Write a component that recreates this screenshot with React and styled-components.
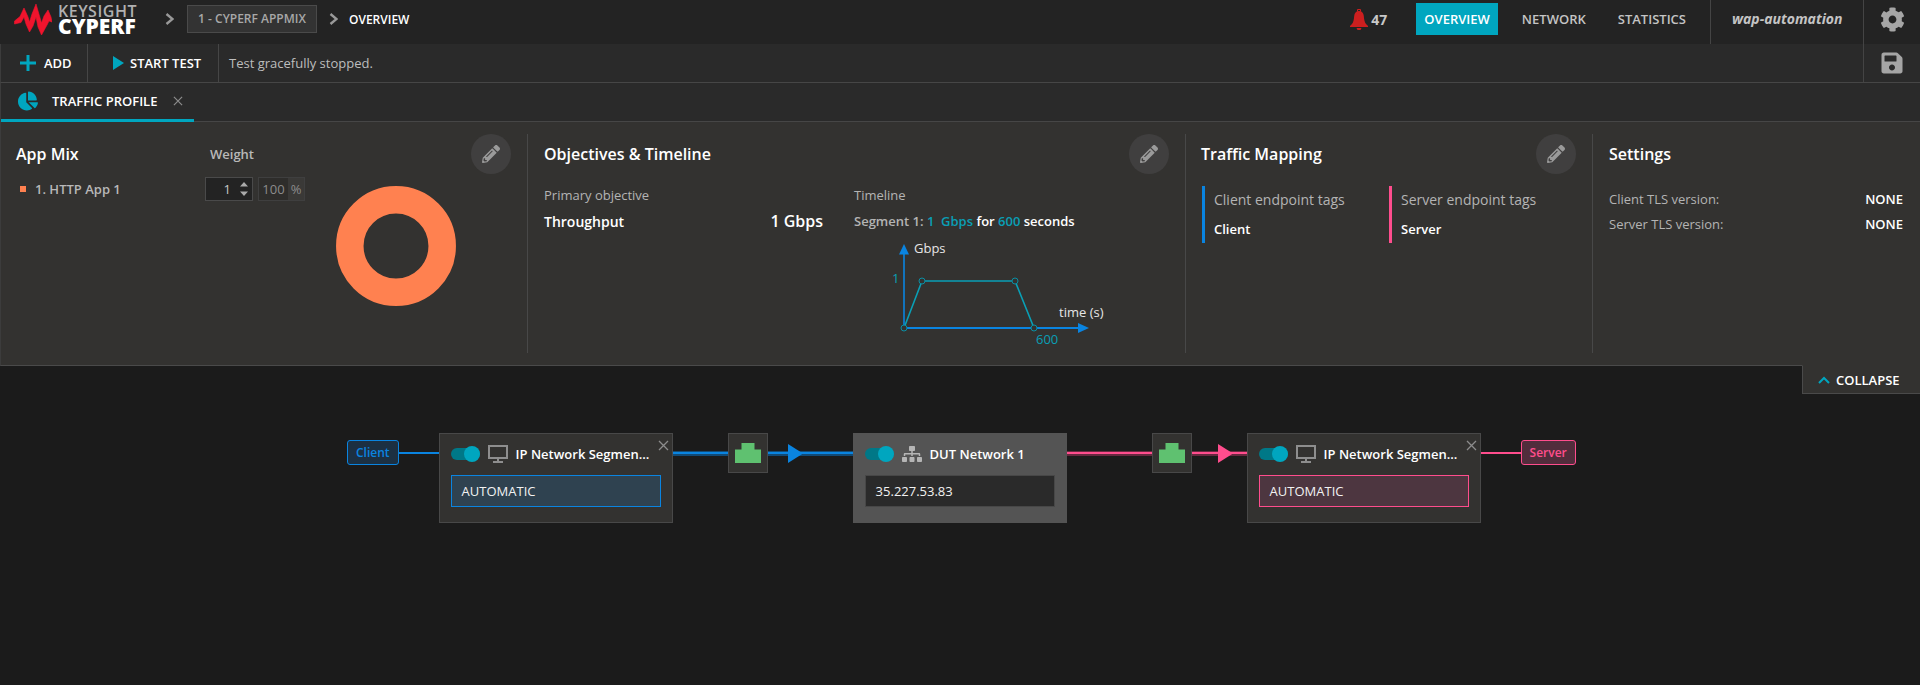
import React from 'react'
import styled, { createGlobalStyle } from 'styled-components'
import { FaCog, FaSave, FaChartPie, FaPencilAlt, FaSitemap } from 'react-icons/fa'

const TEAL = '#00a6bf'
const BLUE = '#0a84e0'
const PINK = '#ff4d8d'

const GlobalStyle = createGlobalStyle`
  html, body { margin: 0; padding: 0; height: 100%; background: #1b1b1b; }
  body { font-family: "Open Sans", "Noto Sans", sans-serif; color: #bbb; overflow: hidden; }
  * { box-sizing: border-box; }
`

function Chevron() {
  return (
    <svg width="9" height="12" viewBox="0 0 9 12" fill="none">
      <path d="M1.5 1l6 5-6 5" stroke="#999" strokeWidth="2.4" />
    </svg>
  )
}

function Logo() {
  return (
    <LogoWrap>
      <svg width="38" height="32" viewBox="0 0 38 32">
        <path
          d="M0.500 18L6 13.500L10 5L14 14L15.500 19L18 11L22 1L25.500 13L27.500 20L30 13L34 7L37 14L38 19L35 18L33 22L27.500 32L24 24L22 14L19 23L15.500 29L12 21L10 14L7 19.500L0.500 21z"
          fill="#f0142d"
          stroke="#f0142d"
          strokeWidth="0.600"
          strokeLinejoin="round"
        />
      </svg>
      <LogoText>
        <span>KEYSIGHT</span>
        <strong>CYPERF</strong>
      </LogoText>
    </LogoWrap>
  )
}

function Bell() {
  return (
    <svg width="18" height="21" viewBox="0 0 18 21" fill="#cc1f1f">
      <path d="M7 2.500V1a1 1 0 0 1 1-1h2a1 1 0 0 1 1 1v1.500h-1V1H8v1.500z" />
      <path d="M9 2c3 0 4.500 2 4.800 5 .3 3.500.7 6 2.200 8 .6.800 1.500 1.300 2 2v1H0v-1c.5-.7 1.400-1.200 2-2 1.500-2 1.900-4.500 2.200-8C4.500 4 6 2 9 2z" />
      <path d="M6.500 19h5l-1 2h-3z" />
    </svg>
  )
}

function Monitor() {
  return (
    <svg width="20" height="18" viewBox="0 0 20 18" fill="none" stroke="#8e8e8e" strokeWidth="2">
      <rect x="1" y="1" width="18" height="12" />
      <path d="M10 13v4M5 17h10" />
    </svg>
  )
}

function PortIcon() {
  return (
    <svg width="26" height="20" viewBox="0 0 26 20" fill="#5fc170">
      <path d="M6.500 0h13v6.500H26V20H0V6.500h6.500z" />
    </svg>
  )
}

function Cross({ size = 11 }) {
  return (
    <svg width={size} height={size} viewBox="0 0 11 11" fill="none" stroke="#8c8c8c" strokeWidth="1.300">
      <path d="M1 1l9 9M10 1l-9 9" />
    </svg>
  )
}

function TimelineChart() {
  return (
    <ChartSvg width="225" height="112" viewBox="0 0 225 112">
      <path d="M19 92V15" stroke={BLUE} strokeWidth="1.600" />
      <path d="M14 18.500L19 8l5 10.500z" fill={BLUE} />
      <path d="M19 92h176" stroke={BLUE} strokeWidth="2" />
      <path d="M193 87l11 5-11 5z" fill={BLUE} />
      <path d="M19 92L37 45H130L149 92" stroke="#0a9fb5" strokeWidth="1.600" fill="none" />
      {[[19, 92], [37, 45], [130, 45], [149, 92]].map(([cx, cy]) => (
        <circle key={cx} cx={cx} cy={cy} r="3" fill="#333230" stroke="#0a8ea3" strokeWidth="1" />
      ))}
      <ChartText x="29" y="17" fill="#e6e6e6">Gbps</ChartText>
      <ChartText x="7" y="47" fill="#0a9fb5">1</ChartText>
      <ChartText x="174" y="81" fill="#e6e6e6">time (s)</ChartText>
      <ChartText x="151" y="108" fill="#0a9fb5">600</ChartText>
    </ChartSvg>
  )
}

function NodeCard({ title, value, icon, kind, closable, width }) {
  return (
    <Card $width={width} $kind={kind}>
      {closable && <CloseBtn><Cross /></CloseBtn>}
      <CardHead>
        <Toggle />
        {icon}
        <CardTitle>{title}</CardTitle>
      </CardHead>
      <CardInput $kind={kind}>{value}</CardInput>
    </Card>
  )
}

function Wire({ color, halo, lead, gap }) {
  return (
    <WireWrap $color={color} $halo={halo} $lead={lead} $gap={gap}>
      <PortBox><PortIcon /></PortBox>
      <svg width="15" height="19" viewBox="0 0 15 19"><path d="M0 0l15 9.500L0 19z" fill={color} /></svg>
    </WireWrap>
  )
}

export default function App() {
  return (
    <Page>
      <GlobalStyle />
      <TopBar>
        <Logo />
        <Crumbs>
          <Chevron />
          <CrumbBox>1 - CYPERF APPMIX</CrumbBox>
          <Chevron />
          <CrumbCurrent>OVERVIEW</CrumbCurrent>
        </Crumbs>
        <TopRight>
          <Bell />
          <Count>47</Count>
          <NavItem $active>OVERVIEW</NavItem>
          <NavItem>NETWORK</NavItem>
          <NavItem>STATISTICS</NavItem>
          <UserName>wap-automation</UserName>
          <IconCell $nudge={-6}><FaCog size={25} color="#a5a5a5" /></IconCell>
        </TopRight>
      </TopBar>

      <ToolBar>
        <ToolBtn $width={87}>
          <svg width="16" height="16" viewBox="0 0 16 16"><path d="M6.500 0h3v6.500H16v3H9.500V16h-3V9.500H0v-3h6.500z" fill={TEAL} /></svg>
          ADD
        </ToolBtn>
        <ToolBtn $width={131} $lead={25}>
          <svg width="11" height="14" viewBox="0 0 11 14"><path d="M0 0l11 7-11 7z" fill={TEAL} /></svg>
          START TEST
        </ToolBtn>
        <StatusText>Test gracefully stopped.</StatusText>
        <IconCell><FaSave size={24} color="#a5a5a5" /></IconCell>
      </ToolBar>

      <TabBar>
        <Tab>
          <FaChartPie size={20} color={TEAL} />
          <TabLabel>TRAFFIC PROFILE</TabLabel>
          <Cross size={10} />
        </Tab>
      </TabBar>

      <Summary>
        <Section $width={527} $pad={15}>
          <EditBtn><FaPencilAlt size={18} /></EditBtn>
          <TitleRow>
            <SectionTitle $width={194}>App Mix</SectionTitle>
            <WeightLabel>Weight</WeightLabel>
          </TitleRow>
          <AppBody>
            <AppRow>
              <Square />
              <AppName>1. HTTP App 1</AppName>
              <Spinner>
                1
                <svg width="8" height="14" viewBox="0 0 8 14" fill="#aaa"><path d="M4 0l4 4.500H0zM0 9.500h8L4 14z" /></svg>
              </Spinner>
              <Percent>
                <PercentValue>100</PercentValue>
                <PercentUnit>%</PercentUnit>
              </Percent>
            </AppRow>
            <Donut width="120" height="120" viewBox="0 0 120 120">
              <circle cx="60" cy="60" r="46.200" fill="none" stroke="#ff8150" strokeWidth="27.500" />
            </Donut>
          </AppBody>
        </Section>

        <Section $width={658}>
          <EditBtn><FaPencilAlt size={18} /></EditBtn>
          <TitleRow><SectionTitle>Objectives &amp; Timeline</SectionTitle></TitleRow>
          <ObjectiveBody>
            <ObjectiveCol>
              <FieldLabel>Primary objective</FieldLabel>
              <ValueRow>
                <strong>Throughput</strong>
                <BigValue>1 Gbps</BigValue>
              </ValueRow>
            </ObjectiveCol>
            <TimelineCol>
              <FieldLabel>Timeline</FieldLabel>
              <SegmentLine>
                Segment 1: <Hl>1&nbsp; Gbps</Hl> <b>for</b> <Hl>600</Hl> <b>seconds</b>
              </SegmentLine>
              <TimelineChart />
            </TimelineCol>
          </ObjectiveBody>
        </Section>

        <Section $width={407} $pad={15}>
          <EditBtn><FaPencilAlt size={18} /></EditBtn>
          <TitleRow><SectionTitle>Traffic Mapping</SectionTitle></TitleRow>
          <TagsBody>
            <TagCol $color={BLUE}>
              <TagLabel>Client endpoint tags</TagLabel>
              <TagValue>Client</TagValue>
            </TagCol>
            <TagCol $color={PINK}>
              <TagLabel>Server endpoint tags</TagLabel>
              <TagValue>Server</TagValue>
            </TagCol>
          </TagsBody>
        </Section>

        <Section $last>
          <TitleRow><SectionTitle>Settings</SectionTitle></TitleRow>
          <SettingsBody>
            <SettingRow><span>Client TLS version:</span><strong>NONE</strong></SettingRow>
            <SettingRow><span>Server TLS version:</span><strong>NONE</strong></SettingRow>
          </SettingsBody>
        </Section>
      </Summary>

      <Canvas>
        <CollapseBtn>
          <svg width="12" height="8" viewBox="0 0 12 8" fill="none"><path d="M1 7l5-5 5 5" stroke={TEAL} strokeWidth="2" /></svg>
          COLLAPSE
        </CollapseBtn>
        <Diagram>
          <EndTag $color={BLUE} $bg="#1c3042">Client</EndTag>
          <Link $color={BLUE} />
          <NodeCard title="IP Network Segmen..." value="AUTOMATIC" icon={<Monitor />} kind="client" closable width={234} />
          <Wire color={BLUE} halo="#124a75" lead={55} gap={20} />
          <NodeCard title="DUT Network 1" value="35.227.53.83" icon={<FaSitemap size={20} color="#b5b5b5" />} kind="dut" width={214} />
          <Wire color={PINK} halo="#66293f" lead={85} gap={26} />
          <NodeCard title="IP Network Segmen..." value="AUTOMATIC" icon={<Monitor />} kind="server" closable width={234} />
          <Link $color={PINK} />
          <EndTag $color={PINK} $bg="#512d3c">Server</EndTag>
        </Diagram>
      </Canvas>
    </Page>
  )
}

const Page = styled.div`
  width: 1920px;
  height: 685px;
  display: flex;
  flex-direction: column;
  overflow: hidden;
  background: #1b1b1b;
`

const TopBar = styled.div`
  height: 44px;
  display: flex;
  align-items: center;
  background: #232323;
  padding-left: 14px;
`

const LogoWrap = styled.div`
  display: flex;
  align-items: center;
  gap: 6px;
  width: 151px;
  margin-top: -6px;
  svg { flex: none; }
`

const LogoText = styled.div`
  display: flex;
  flex-direction: column;
  span {
    font-size: 16px;
    line-height: 14px;
    font-weight: 600;
    color: #b0b0b0;
    letter-spacing: 0.5px;
    white-space: nowrap;
  }
  strong {
    font-size: 21px;
    line-height: 16px;
    font-weight: 800;
    color: #fff;
  }
`

const Crumbs = styled.div`
  display: flex;
  align-items: center;
  margin-top: -6px;
`

const CrumbBox = styled.div`
  width: 130px;
  height: 28px;
  margin: 0 12px 0 13px;
  background: #333;
  border: 1px solid #4a4a4a;
  font-size: 12px;
  font-weight: 600;
  line-height: 26px;
  text-align: center;
  color: #a8a8a8;
`

const CrumbCurrent = styled.div`
  margin-left: 11px;
  font-size: 12px;
  font-weight: 600;
  color: #fff;
`

const TopRight = styled.div`
  margin-left: auto;
  display: flex;
  align-items: center;
  height: 100%;
  > svg { margin-top: -6px; }
`

const Count = styled.div`
  width: 45px;
  margin: -6px 0 0 3px;
  font-size: 14px;
  font-weight: 700;
  color: #c8c8c8;
`

const NavItem = styled.div`
  height: 32px;
  margin-top: -6px;
  padding: 0 ${p => (p.$active ? 8 : 0)}px;
  margin-right: ${p => (p.$active ? 24 : 32)}px;
  background: ${p => (p.$active ? TEAL : 'transparent')};
  color: ${p => (p.$active ? '#fff' : '#c4c4c4')};
  font-size: 13px;
  font-weight: 600;
  line-height: 32px;
`

const UserName = styled.div`
  width: 153px;
  height: 100%;
  margin-left: -8px;
  padding: 0 0 6px 21px;
  border-left: 1px solid #444;
  font-size: 14px;
  font-weight: 700;
  font-style: italic;
  line-height: 38px;
  color: #c4c4c4;
`

const IconCell = styled.div`
  width: 57px;
  height: 100%;
  flex: none;
  display: flex;
  align-items: center;
  justify-content: center;
  border-left: 1px solid #444;
  svg { margin-top: ${p => p.$nudge || 0}px; }
`

const ToolBar = styled.div`
  height: 39px;
  display: flex;
  align-items: center;
  background: #2a2a2a;
  border-bottom: 1px solid #464646;
  border-left: 1px solid #3c3c3c;
`

const ToolBtn = styled.div`
  width: ${p => p.$width}px;
  height: 100%;
  display: flex;
  align-items: center;
  gap: ${p => (p.$lead ? 6 : 8)}px;
  padding-left: ${p => p.$lead || 19}px;
  border-right: 1px solid #464646;
  font-size: 13px;
  font-weight: 600;
  color: #fff;
`

const StatusText = styled.div`
  flex: 1;
  padding-left: 10px;
  font-size: 13px;
  color: #bdbdbd;
`

const TabBar = styled.div`
  height: 39px;
  display: flex;
  background: #2a2a2a;
  border-bottom: 1px solid #464646;
  border-left: 1px solid #3c3c3c;
`

const Tab = styled.div`
  width: 193px;
  height: 39px;
  padding-left: 17px;
  display: flex;
  align-items: center;
  border-bottom: 3px solid ${TEAL};
`

const TabLabel = styled.span`
  width: 135px;
  padding-left: 14px;
  font-size: 13px;
  font-weight: 600;
  white-space: nowrap;
  color: #fff;
`

const Summary = styled.div`
  height: 244px;
  display: flex;
  padding: 12px 0;
  background: #333230;
  border-bottom: 1px solid #4a4a4a;
  border-left: 1px solid #3c3c3c;
`

const Section = styled.section`
  position: relative;
  width: ${p => (p.$width ? `${p.$width}px` : 'auto')};
  flex: ${p => (p.$last ? 1 : 'none')};
  padding: 0 17px 0 ${p => p.$pad || 16}px;
  border-right: ${p => (p.$last ? 'none' : '1px solid #484848')};
`

const EditBtn = styled.div`
  position: absolute;
  top: 0;
  right: 16px;
  width: 40px;
  height: 40px;
  display: flex;
  align-items: center;
  justify-content: center;
  border-radius: 50%;
  background: #403f3f;
  color: #9a9a9a;
`

const TitleRow = styled.div`
  height: 40px;
  display: flex;
  align-items: center;
`

const SectionTitle = styled.h3`
  margin: 0;
  width: ${p => (p.$width ? `${p.$width}px` : 'auto')};
  font-size: 16px;
  font-weight: 600;
  color: #fff;
`

const WeightLabel = styled.div`
  font-size: 13px;
  font-weight: 600;
  color: #b8b8b8;
`

const AppBody = styled.div`
  display: flex;
  align-items: flex-start;
  padding-top: 3px;
`

const AppRow = styled.div`
  display: flex;
  align-items: center;
  height: 24px;
`

const Square = styled.span`
  width: 6px;
  height: 6px;
  margin: 0 9px 0 4px;
  background: #ff8150;
`

const AppName = styled.div`
  width: 170px;
  font-size: 13px;
  font-weight: 600;
  color: #b8b8b8;
`

const Spinner = styled.div`
  width: 48px;
  height: 24px;
  display: flex;
  align-items: center;
  justify-content: flex-end;
  gap: 9px;
  padding-right: 4px;
  background: #232323;
  border: 1px solid #4a4a4a;
  font-size: 13px;
  color: #c8c8c8;
`

const Percent = styled.div`
  width: 47px;
  height: 24px;
  margin-left: 5px;
  display: flex;
  border: 1px solid #3f3f3f;
  background: #2e2d2b;
  font-size: 13px;
  line-height: 22px;
  color: #8c8c8c;
`

const PercentValue = styled.span`
  flex: 1;
  text-align: center;
`

const PercentUnit = styled.span`
  width: 16px;
  text-align: center;
  background: #3a3937;
`

const Donut = styled.svg`
  flex: none;
  margin: 9px 0 0 31px;
`

const ObjectiveBody = styled.div`
  display: flex;
  gap: 31px;
  padding-top: 11px;
`

const ObjectiveCol = styled.div`
  width: 279px;
`

const TimelineCol = styled.div`
  flex: 1;
`

const FieldLabel = styled.div`
  font-size: 13px;
  line-height: 20px;
  color: #b4b4b4;
`

const ValueRow = styled.div`
  display: flex;
  justify-content: space-between;
  align-items: center;
  margin-top: 6px;
  height: 20px;
  font-size: 14px;
  color: #fff;
  strong { font-weight: 600; }
`

const BigValue = styled.span`
  font-size: 16px;
  font-weight: 600;
`

const SegmentLine = styled.div`
  margin-top: 6px;
  height: 20px;
  font-size: 13px;
  font-weight: 600;
  line-height: 20px;
  color: #b4b4b4;
  white-space: nowrap;
  b { font-weight: 600; color: #fff; }
`

const Hl = styled.span`
  color: #0a9fb5;
`

const ChartSvg = styled.svg`
  display: block;
  margin: 5px 0 0 31px;
`

const ChartText = styled.text`
  font-family: "Open Sans", sans-serif;
  font-size: 13px;
`

const TagsBody = styled.div`
  display: flex;
  margin: 12px 0 0 1px;
`

const TagCol = styled.div`
  width: 187px;
  height: 57px;
  padding: 4px 0 0 9px;
  border-left: 3px solid ${p => p.$color};
  flex: none;
`

const TagLabel = styled.div`
  font-size: 14px;
  line-height: 20px;
  color: #b4b4b4;
`

const TagValue = styled.div`
  margin-top: 9px;
  font-size: 13px;
  font-weight: 600;
  line-height: 20px;
  color: #fff;
`

const SettingsBody = styled.div`
  display: flex;
  flex-direction: column;
  gap: 5px;
  padding-top: 15px;
`

const SettingRow = styled.div`
  display: flex;
  justify-content: space-between;
  font-size: 13px;
  line-height: 20px;
  color: #b4b4b4;
  strong { font-weight: 600; color: #fff; }
`

const Canvas = styled.div`
  position: relative;
  flex: 1;
  padding: 67px 0 0 347px;
  background: #1b1b1b;
`

const CollapseBtn = styled.div`
  position: absolute;
  top: -1px;
  right: 0;
  width: 118px;
  height: 29px;
  display: flex;
  align-items: center;
  gap: 6px;
  padding-left: 15px;
  background: #333230;
  border-left: 1px solid #4a4a4a;
  border-bottom: 1px solid #4a4a4a;
  border-top: 1px solid #333230;
  font-size: 13px;
  font-weight: 600;
  color: #fff;
`

const Diagram = styled.div`
  display: flex;
  align-items: flex-start;
`

const EndTag = styled.div`
  height: 25px;
  margin-top: 7px;
  padding: 0 8px;
  background: ${p => p.$bg};
  border: 1px solid ${p => p.$color};
  border-radius: 3px;
  font-size: 12px;
  font-weight: 600;
  line-height: 23px;
  color: ${p => p.$color};
`

const Link = styled.div`
  width: 40px;
  height: 2px;
  margin-top: 19px;
  background: ${p => p.$color};
`

const Card = styled.div`
  position: relative;
  width: ${p => p.$width}px;
  height: 90px;
  flex: none;
  padding: 11px 11px 15px;
  background: ${p => (p.$kind === 'dut' ? '#545454' : '#333230')};
  border: 1px solid ${p => (p.$kind === 'dut' ? '#545454' : '#484848')};
`

const CloseBtn = styled.div`
  position: absolute;
  top: 6px;
  right: 3px;
  line-height: 0;
`

const CardHead = styled.div`
  height: 18px;
  display: flex;
  align-items: center;
  gap: 8px;
  svg { flex: none; }
`

const Toggle = styled.span`
  position: relative;
  width: 29px;
  height: 12px;
  flex: none;
  border-radius: 6px;
  background: #007887;
  &::after {
    content: "";
    position: absolute;
    top: -2px;
    right: 0;
    width: 16px;
    height: 16px;
    border-radius: 50%;
    background: ${TEAL};
  }
`

const CardTitle = styled.div`
  white-space: nowrap;
  font-size: 13px;
  font-weight: 600;
  color: #fff;
`

const inputColors = {
  client: ['#2f4250', BLUE],
  server: ['#4d3640', PINK],
  dut: ['#2a2a2a', '#474747'],
}

const CardInput = styled.div`
  height: 32px;
  margin-top: 12px;
  padding-left: 10px;
  background: ${p => inputColors[p.$kind][0]};
  border: 1px solid ${p => inputColors[p.$kind][1]};
  font-size: 13px;
  line-height: 30px;
  color: #f2f2f2;
`

const WireWrap = styled.div`
  width: 180px;
  height: 40px;
  flex: none;
  display: flex;
  align-items: center;
  gap: ${p => p.$gap}px;
  padding-left: ${p => p.$lead}px;
  background: linear-gradient(
    to bottom,
    transparent 18px,
    ${p => p.$halo} 18px,
    ${p => p.$halo} 19px,
    ${p => p.$color} 19px,
    ${p => p.$color} 21px,
    ${p => p.$halo} 21px,
    ${p => p.$halo} 23px,
    transparent 23px
  );
`

const PortBox = styled.div`
  width: 40px;
  height: 40px;
  flex: none;
  display: flex;
  align-items: center;
  justify-content: center;
  background: #333230;
  border: 1px solid #484848;
`
